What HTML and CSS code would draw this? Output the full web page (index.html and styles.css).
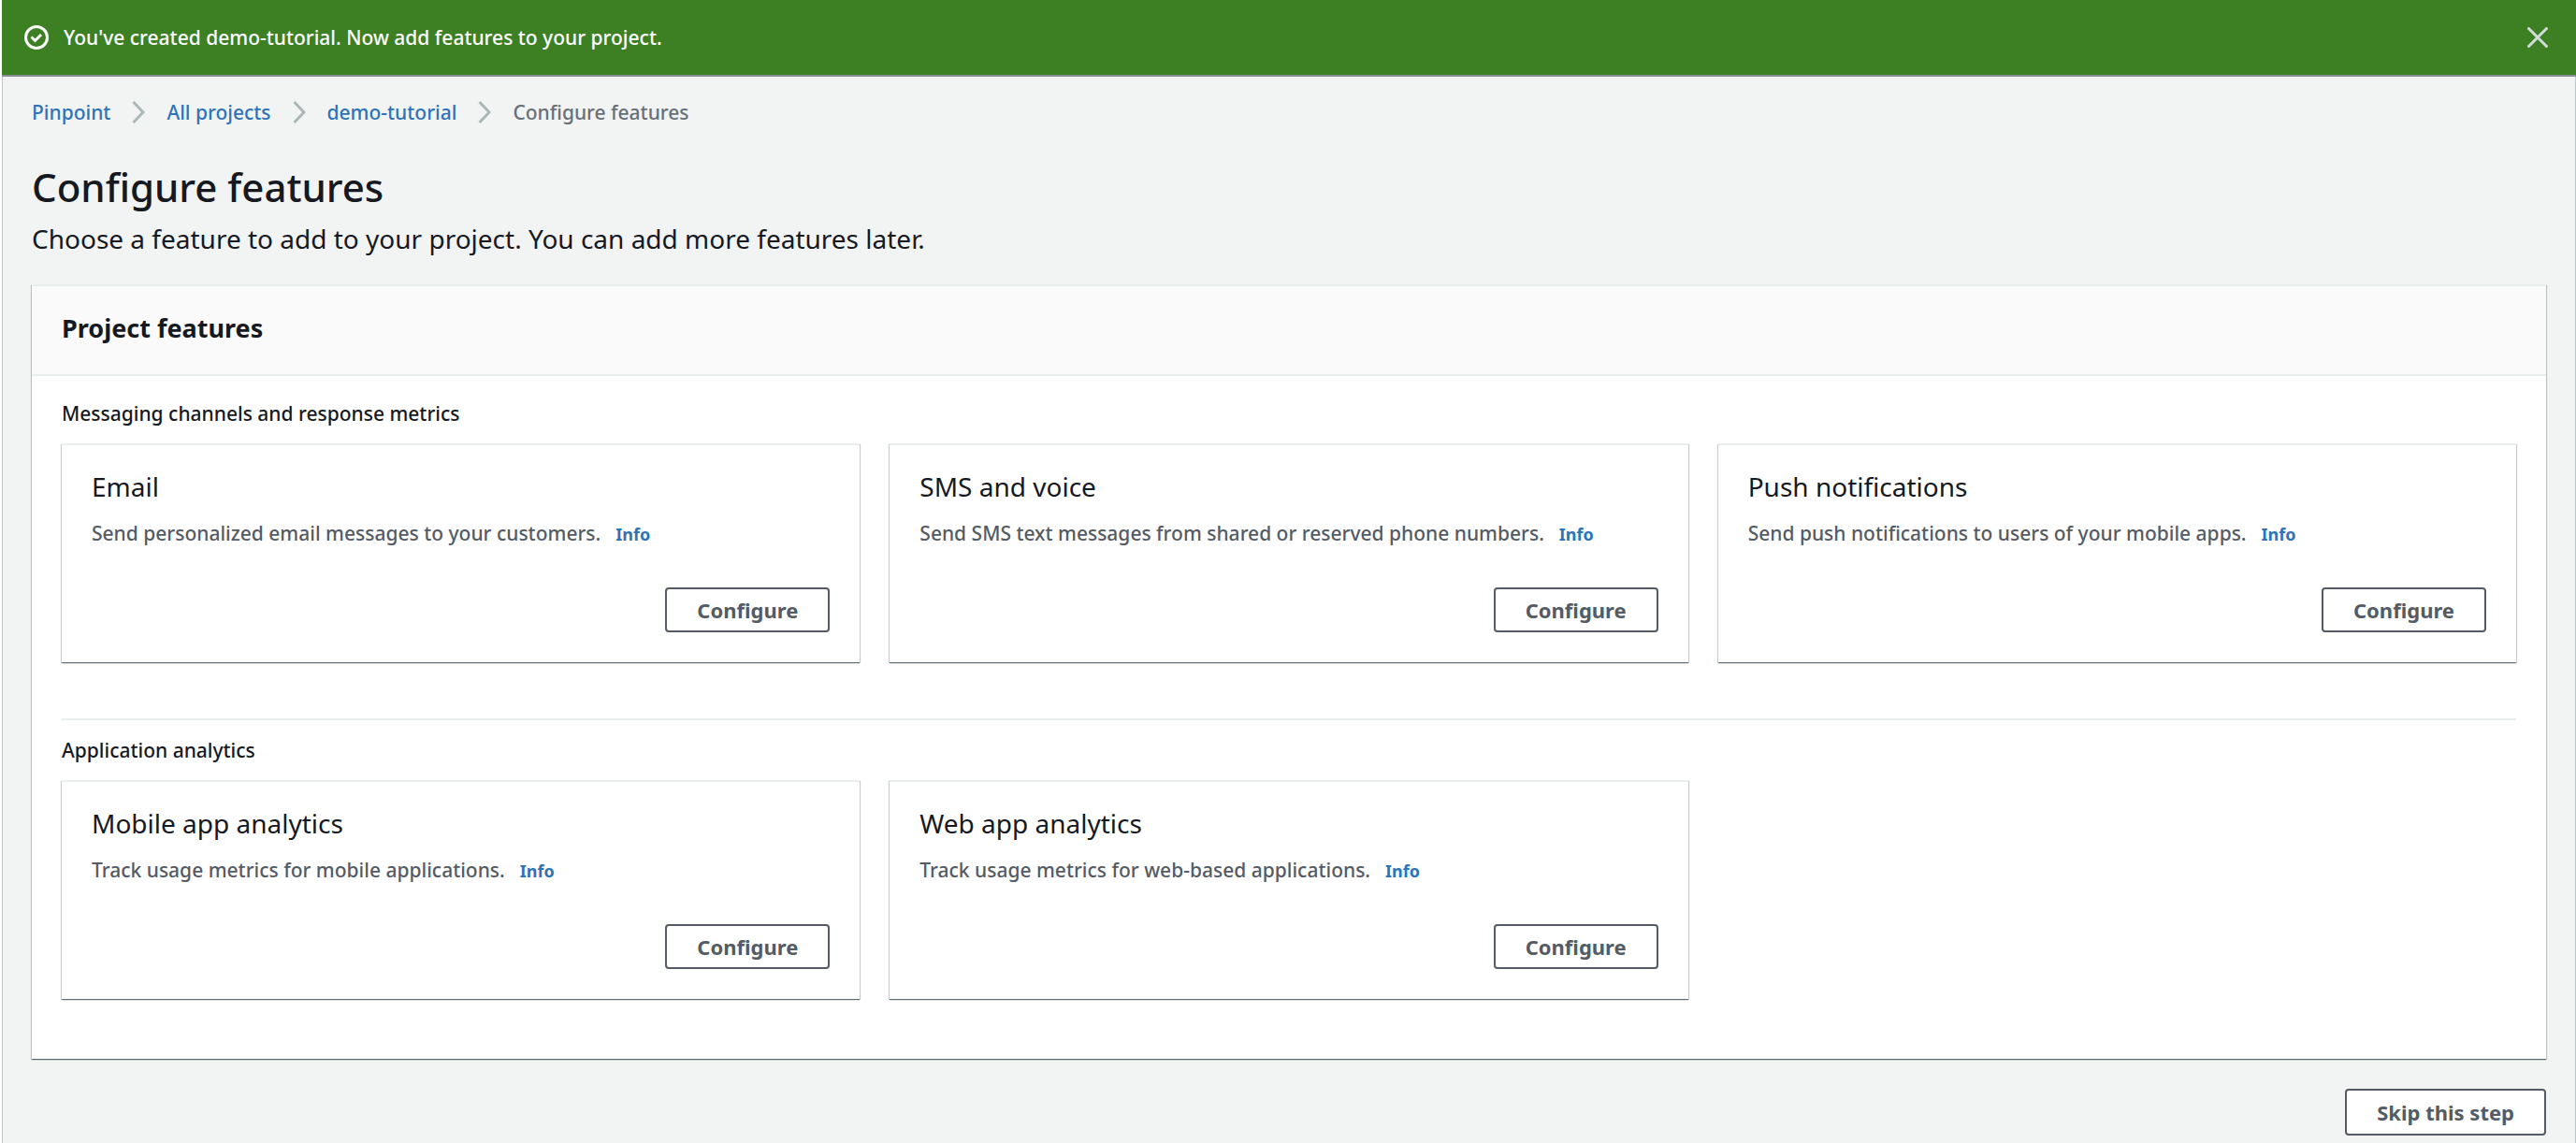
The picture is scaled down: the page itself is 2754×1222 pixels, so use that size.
FILE: index.html
```html
<!DOCTYPE html>
<html lang="en">
<head>
<meta charset="utf-8">
<title>Configure features</title>
<link rel="stylesheet" href="styles.css">
</head>
<body>
<div class="app">
  <div class="flash" role="status">
    <svg class="flash-icon" viewBox="0 0 26 26" aria-hidden="true"><circle cx="13" cy="13" r="11.5"/><path d="M7.500 12.500l4 4 6.500-6.500"/></svg>
    <p class="flash-text">You've created demo-tutorial. Now add features to your project.</p>
    <button class="flash-close" type="button" aria-label="Dismiss"><svg viewBox="0 0 22 22" aria-hidden="true"><path d="M1.500 1.500l19 19M20.500 1.500l-19 19"/></svg></button>
  </div>

  <main class="content">
    <nav aria-label="Breadcrumb">
      <ol class="breadcrumb">
        <li><a href="#">Pinpoint</a><svg class="chevron" viewBox="0 0 14 24" aria-hidden="true"><path d="M1.500 1l10.500 11-10.500 11"/></svg></li>
        <li><a href="#">All projects</a><svg class="chevron" viewBox="0 0 14 24" aria-hidden="true"><path d="M1.500 1l10.500 11-10.500 11"/></svg></li>
        <li><a href="#">demo-tutorial</a><svg class="chevron" viewBox="0 0 14 24" aria-hidden="true"><path d="M1.500 1l10.500 11-10.500 11"/></svg></li>
        <li aria-current="page">Configure features</li>
      </ol>
    </nav>

    <h1 class="title">Configure features</h1>
    <p class="subtitle">Choose a feature to add to your project. You can add more features later.</p>

    <section class="panel">
      <header class="panel-header"><h2>Project features</h2></header>
      <div class="panel-body">
        <section class="group">
          <h3 class="group-title">Messaging channels and response metrics</h3>
          <div class="cards">
            <article class="card">
              <h4 class="card-title">Email</h4>
              <p class="card-text">Send personalized email messages to your customers.<a class="info" href="#">Info</a></p>
              <button class="button" type="button">Configure</button>
            </article>
            <article class="card">
              <h4 class="card-title">SMS and voice</h4>
              <p class="card-text">Send SMS text messages from shared or reserved phone numbers.<a class="info" href="#">Info</a></p>
              <button class="button" type="button">Configure</button>
            </article>
            <article class="card">
              <h4 class="card-title">Push notifications</h4>
              <p class="card-text">Send push notifications to users of your mobile apps.<a class="info" href="#">Info</a></p>
              <button class="button" type="button">Configure</button>
            </article>
          </div>
        </section>
        <section class="group">
          <h3 class="group-title">Application analytics</h3>
          <div class="cards">
            <article class="card">
              <h4 class="card-title">Mobile app analytics</h4>
              <p class="card-text">Track usage metrics for mobile applications.<a class="info" href="#">Info</a></p>
              <button class="button" type="button">Configure</button>
            </article>
            <article class="card">
              <h4 class="card-title">Web app analytics</h4>
              <p class="card-text">Track usage metrics for web-based applications.<a class="info" href="#">Info</a></p>
              <button class="button" type="button">Configure</button>
            </article>
          </div>
        </section>
      </div>
    </section>

    <div class="actions"><button class="button button-large" type="button">Skip this step</button></div>
  </main>
</div>
</body>
</html>
```
FILE: styles.css
```css
* {
  box-sizing: border-box;
}

body {
  margin: 0;
  background: #fff;
  color: #16191f;
  font-family: "Noto Sans", sans-serif;
  font-size: 21px;
  font-weight: 500;
  line-height: 32px;
}

h1, h2, h3, h4, p, ol {
  margin: 0;
  padding: 0;
}

a {
  color: #2e73b8;
  text-decoration: none;
}

.app {
  min-height: 100vh;
  margin-left: 2px;
  background: #f2f3f3;
  box-shadow: inset 1px 0 #bfc4c8, inset -1px 0 #bfc4c8;
}

/* Success message */
.flash {
  display: flex;
  align-items: center;
  gap: 16px;
  padding: 24px 30px 24px 24px;
  background: #3d8023;
  color: #fff;
  border-bottom: 2px solid #878f93;
}

.flash-icon {
  flex: none;
  width: 26px;
  height: 26px;
  fill: none;
  stroke: #fff;
  stroke-width: 3;
}

.flash-text {
  flex: 1;
}

.flash-close {
  display: flex;
  padding: 0;
  border: 0;
  background: none;
}

.flash-close svg {
  width: 22px;
  height: 22px;
  fill: none;
  stroke: #d5dbdb;
  stroke-width: 3;
  stroke-linecap: round;
}

/* Page heading */
.content {
  padding: 22px 32px 8px;
}

.breadcrumb {
  display: flex;
  flex-wrap: wrap;
  gap: 23px;
  list-style: none;
  color: #687078;
}

.breadcrumb li {
  display: flex;
  align-items: center;
  gap: 23px;
}

.chevron {
  width: 14px;
  height: 24px;
  fill: none;
  stroke: #aab7b8;
  stroke-width: 3;
}

.title {
  margin-top: 38px;
  font-size: 42px;
  font-weight: 500;
  line-height: 52px;
}

.subtitle {
  margin-top: 11px;
  font-size: 28px;
  font-weight: 400;
  line-height: 36px;
}

/* Feature panel */
.panel,
.card {
  background: #fff;
  border-top: 2px solid #eaeded;
  box-shadow: 0 1px 1px rgba(0, 28, 36, 0.5), 1px 1px 1px rgba(0, 28, 36, 0.15), -1px 1px 1px rgba(0, 28, 36, 0.15);
}

.panel {
  margin-top: 31px;
}

.panel-header {
  padding: 27px 32px 31px;
  background: #fafafa;
  border-bottom: 2px solid #eaeded;
}

.panel-header h2 {
  font-size: 27px;
  font-weight: 700;
  line-height: 36px;
}

.panel-body {
  padding: 24px 32px 64px;
}

.group + .group {
  margin-top: 60px;
  padding-top: 16px;
  border-top: 2px solid #eaeded;
}

.group-title {
  font-size: 21px;
  font-weight: 500;
}

.cards {
  display: grid;
  grid-template-columns: repeat(3, 1fr);
  gap: 32px;
  margin-top: 16px;
}

.card {
  display: flex;
  flex-direction: column;
  padding: 26px 32px 32px;
}

.card-title {
  font-size: 28px;
  font-weight: 400;
  line-height: 36px;
}

.card-text {
  margin: 16px 0 42px;
  color: #545b64;
}

.info {
  margin-left: 16px;
  font-size: 18px;
  font-weight: 700;
  line-height: 1;
}

.button {
  align-self: flex-end;
  height: 48px;
  margin-top: auto;
  padding: 0 32px;
  border: 2px solid #545b64;
  border-radius: 4px;
  background: #fff;
  color: #545b64;
  font: 700 22px/32px "Noto Sans", sans-serif;
}

.button-large {
  height: 50px;
}

.actions {
  display: flex;
  justify-content: flex-end;
  margin-top: 32px;
}
```
